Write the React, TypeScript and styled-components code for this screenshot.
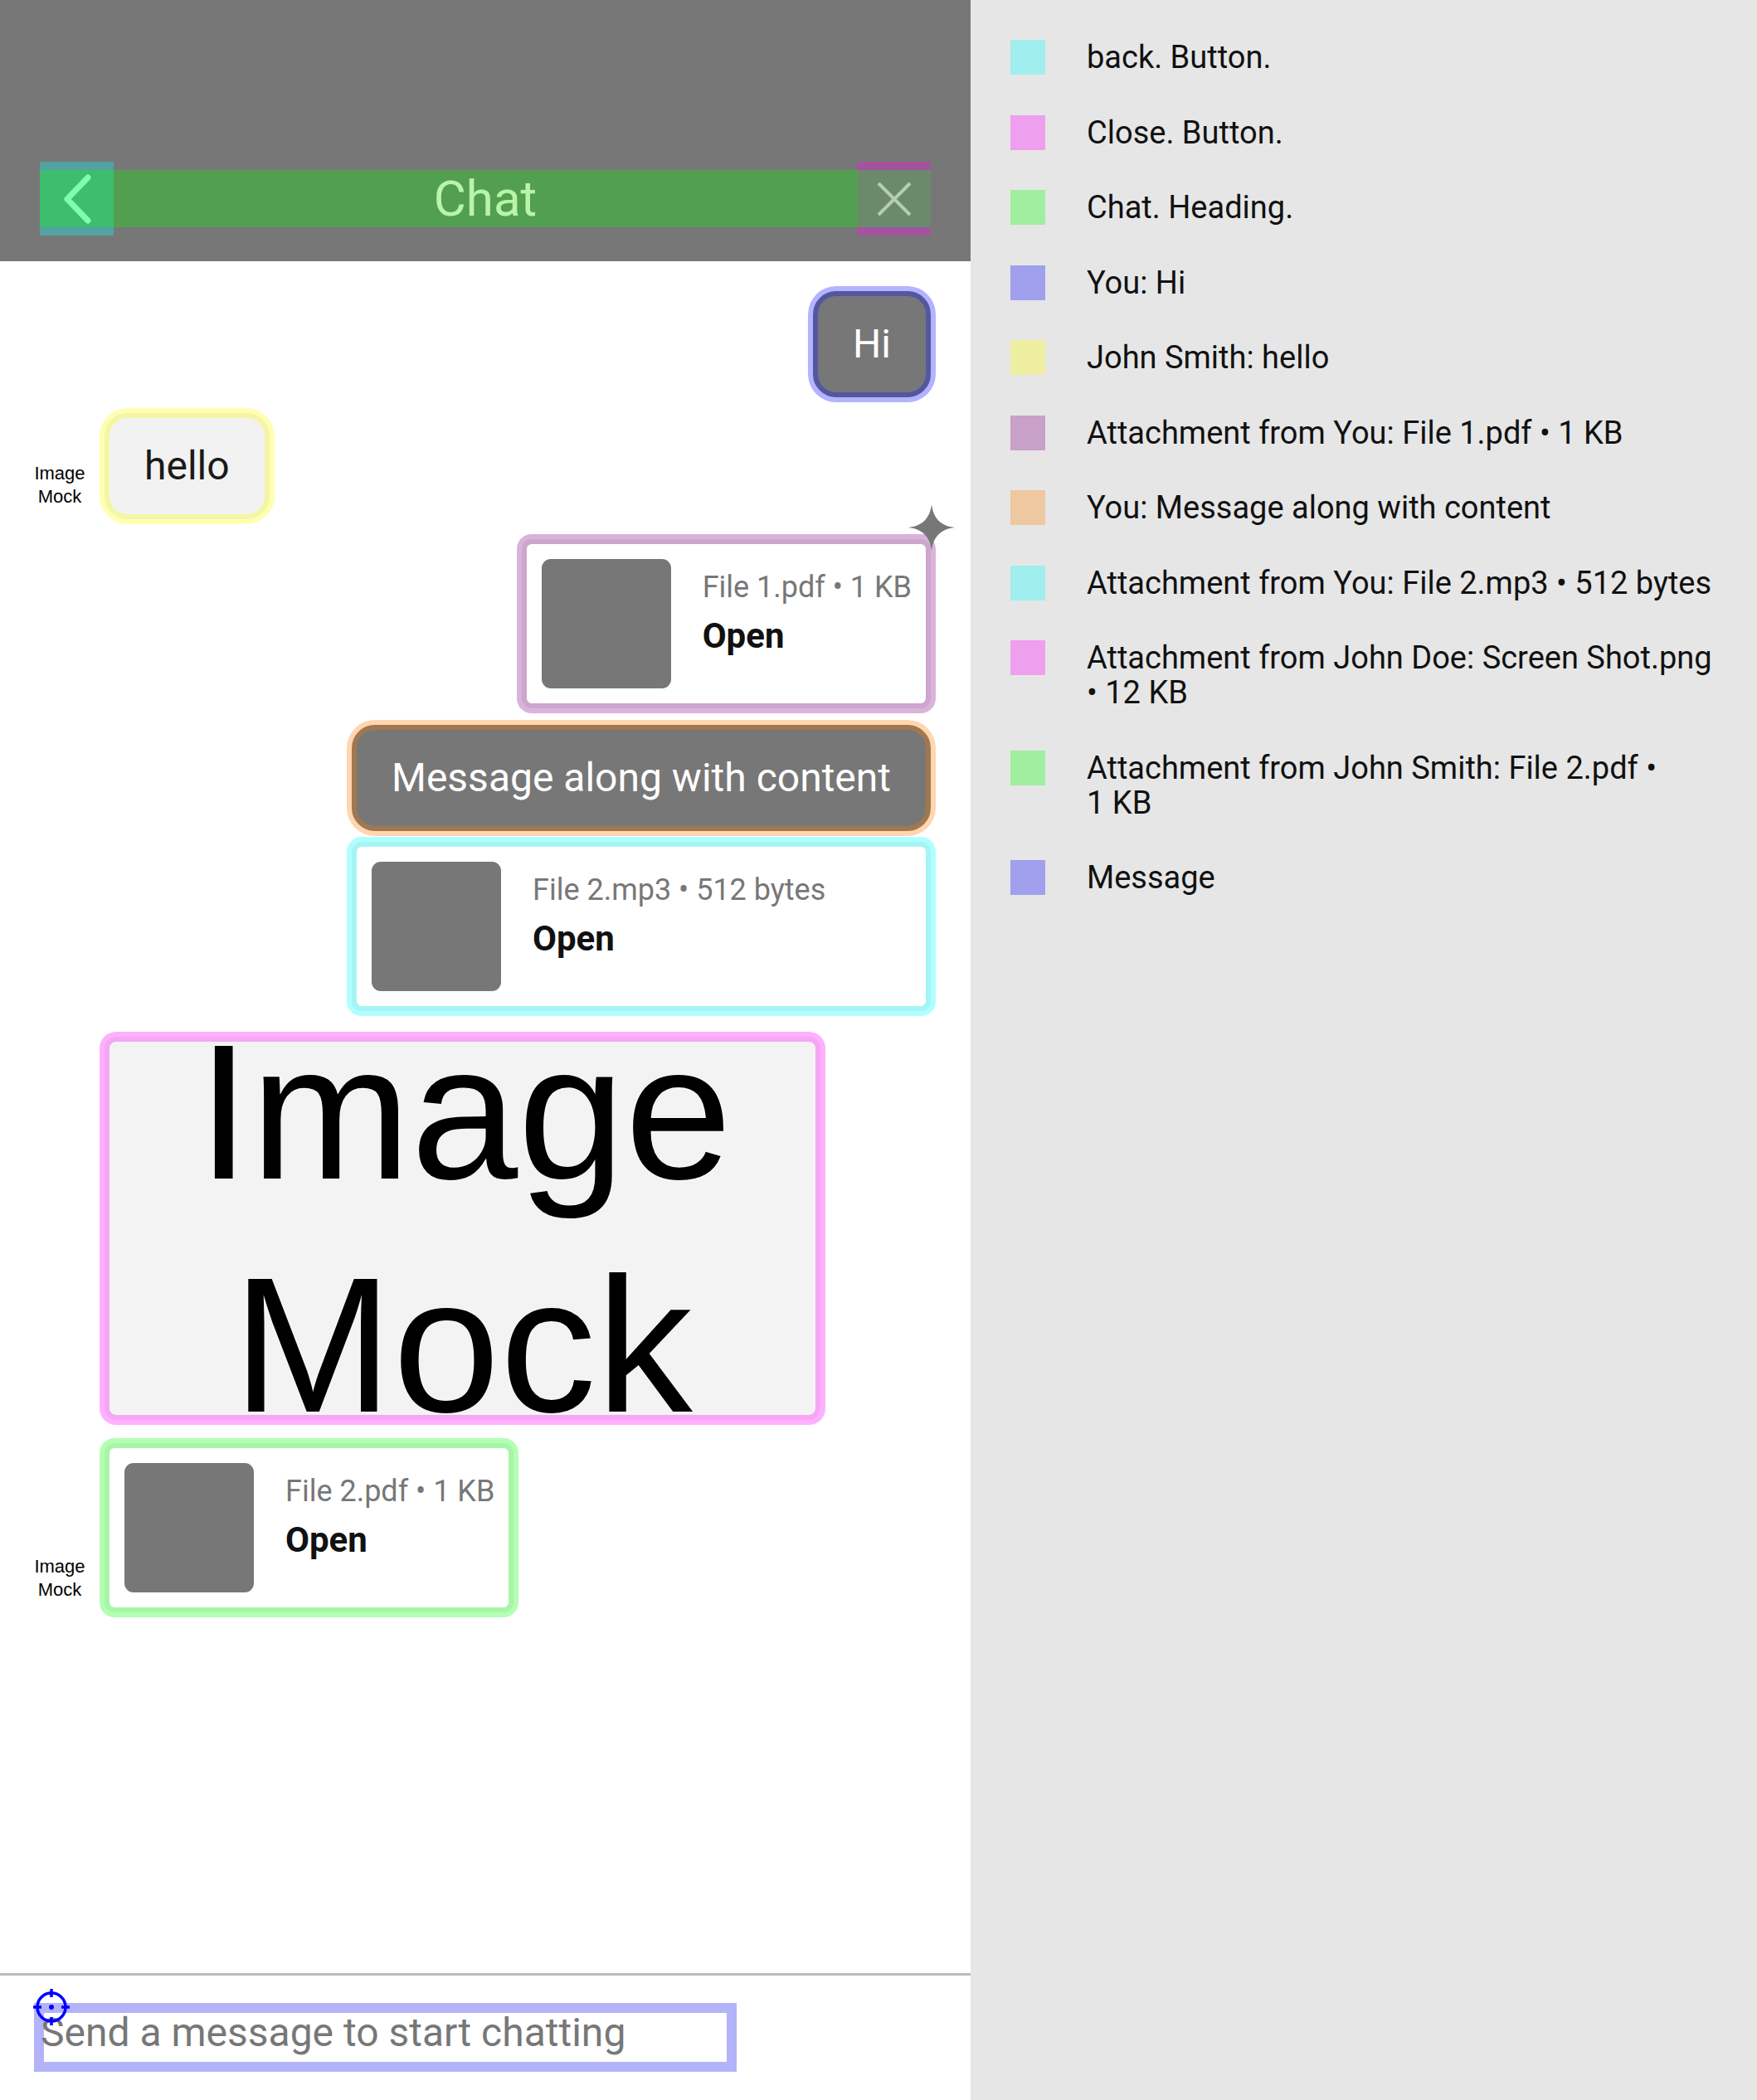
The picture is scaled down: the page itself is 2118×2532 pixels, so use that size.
import React from "react";
import styled, { createGlobalStyle } from "styled-components";

const GlobalStyle = createGlobalStyle`
  html, body {
    margin: 0;
    padding: 0;
    background: #ffffff;
  }
  body {
    font-family: Roboto, "Noto Sans", "Liberation Sans", sans-serif;
  }
  * {
    box-sizing: border-box;
  }
`;

type Tone = { glow: string; ring: string };

const TONES: Record<string, Tone> = {
  lavender: { glow: "#b3b3ff", ring: "#5656a0" },
  yellow: { glow: "#ffffb3", ring: "#f5f5a8" },
  purple: { glow: "#d9b3d9", ring: "#cda5cd" },
  peach: { glow: "#ffd6b0", ring: "#a07850" },
  cyan: { glow: "#b0ffff", ring: "#a6f5f5" },
  pink: { glow: "#ffb0ff", ring: "#f5a6f5" },
  green: { glow: "#b3ffb3", ring: "#a8f5a8" },
};

const LEGEND = [
  { color: "#a0eeee", label: "back. Button." },
  { color: "#eea0ee", label: "Close. Button." },
  { color: "#a0eea0", label: "Chat. Heading." },
  { color: "#a0a0ee", label: "You: Hi" },
  { color: "#eeeea0", label: "John Smith: hello" },
  { color: "#c8a0c8", label: "Attachment from You: File 1.pdf • 1\u00a0KB" },
  { color: "#eec8a0", label: "You: Message along with content" },
  { color: "#a0eeee", label: "Attachment from You: File 2.mp3 • 512\u00a0bytes" },
  { color: "#eea0ee", label: "Attachment from John Doe: Screen Shot.png • 12\u00a0KB" },
  { color: "#a0eea0", label: "Attachment from John Smith: File 2.pdf • 1\u00a0KB" },
  { color: "#a0a0ee", label: "Message" },
];

function FileCard({ tone, name }: { tone: Tone; name: string }) {
  return (
    <Card $tone={tone}>
      <Thumb />
      <FileText>
        <FileName>{name}</FileName>
        <OpenLabel>Open</OpenLabel>
      </FileText>
    </Card>
  );
}

export default function App() {
  return (
    <>
      <GlobalStyle />
      <Page>
        <ChatPane>
          <Header>
            <HeaderRow>
              <HeaderButton $edge="#52a3a1" $mid="#3dbd6d" aria-label="back">
                <svg width="36" height="62" viewBox="0 0 36 62">
                  <polyline
                    points="31,5 6,31 31,57"
                    fill="none"
                    stroke="#80fcb0"
                    strokeWidth="7"
                    strokeLinecap="round"
                    strokeLinejoin="round"
                  />
                </svg>
              </HeaderButton>
              <Title>Chat</Title>
              <HeaderButton $edge="#a2549f" $mid="#6b8a6c" aria-label="close">
                <svg width="42" height="42" viewBox="0 0 42 42">
                  <path d="M2 2 L40 40 M40 2 L2 40" stroke="#b6cdb6" strokeWidth="4" />
                </svg>
              </HeaderButton>
            </HeaderRow>
          </Header>

          <MessageList>
            <Row $end $mt={0}>
              <Bubble $mine $tone={TONES.lavender}>Hi</Bubble>
            </Row>

            <Row $mt={19}>
              <Avatar>Image Mock</Avatar>
              <Bubble $tone={TONES.yellow}>hello</Bubble>
            </Row>

            <Row $end $mt={24}>
              <Anchor>
                <FileCard tone={TONES.purple} name="File 1.pdf • 1 KB" />
                <Sparkle width="56" height="56" viewBox="0 0 56 56">
                  <path
                    d="M28 0 C30 17 39 26 56 28 C39 30 30 39 28 56 C26 39 17 30 0 28 C17 26 26 17 28 0 Z"
                    fill="#777777"
                  />
                </Sparkle>
              </Anchor>
            </Row>

            <Row $end $mt={20}>
              <Stack>
                <Bubble $mine $tone={TONES.peach}>Message along with content</Bubble>
                <FileCard tone={TONES.cyan} name="File 2.mp3 • 512 bytes" />
              </Stack>
            </Row>

            <Row $mt={31}>
              <AvatarSpace />
              <ImageBubble $tone={TONES.pink}>
                <ImageAlt>Image Mock</ImageAlt>
              </ImageBubble>
            </Row>

            <Row $mt={28}>
              <Avatar>Image Mock</Avatar>
              <FileCard tone={TONES.green} name="File 2.pdf • 1 KB" />
            </Row>
          </MessageList>

          <Footer>
            <InputArea>
              <InputFrame />
              <MessageInput placeholder="Send a message to start chatting" />
              <Crosshair width="48" height="48" viewBox="0 0 48 48">
                <g stroke="#0000ff" strokeWidth="3.5" fill="none">
                  <circle cx="24" cy="24" r="17" />
                  <path d="M24 2 V12 M24 36 V46 M2 24 H12 M36 24 H46" />
                </g>
                <circle cx="24" cy="24" r="3" fill="#0000ff" />
              </Crosshair>
            </InputArea>
          </Footer>
        </ChatPane>

        <LegendPane>
          {LEGEND.map((item, i) => (
            <LegendItem key={i}>
              <Swatch $color={item.color} />
              <LegendText>{item.label}</LegendText>
            </LegendItem>
          ))}
        </LegendPane>
      </Page>
    </>
  );
}

// --- Styled Components ---

const Page = styled.div`
  display: flex;
  width: 2118px;
  height: 2532px;
  overflow: hidden;
`;

const ChatPane = styled.div`
  width: 1170px;
  flex-shrink: 0;
  display: flex;
  flex-direction: column;
  background: #ffffff;
`;

const Header = styled.header`
  height: 315px;
  flex-shrink: 0;
  background: #777777;
  display: flex;
  align-items: flex-end;
  padding: 0 48px 31px;
`;

const HeaderRow = styled.div`
  display: flex;
  align-items: center;
  width: 100%;
`;

const HeaderButton = styled.div<{ $edge: string; $mid: string }>`
  width: 89px;
  height: 89px;
  flex-shrink: 0;
  display: flex;
  align-items: center;
  justify-content: center;
  background: linear-gradient(
    to bottom,
    ${({ $edge }) => $edge} 0 10px,
    ${({ $mid }) => $mid} 10px 79px,
    ${({ $edge }) => $edge} 79px
  );
`;

const Title = styled.h1`
  flex: 1;
  margin: 0;
  height: 69px;
  background: #539f51;
  color: #b8f5a8;
  font-size: 60px;
  font-weight: 400;
  line-height: 69px;
  text-align: center;
`;

const MessageList = styled.div`
  flex: 1;
  display: flex;
  flex-direction: column;
  padding: 36px 48px 0 40px;
`;

const Row = styled.div<{ $end?: boolean; $mt: number }>`
  display: flex;
  justify-content: ${({ $end }) => ($end ? "flex-end" : "flex-start")};
  margin-top: ${({ $mt }) => $mt}px;
`;

const Avatar = styled.div`
  width: 64px;
  margin-right: 22px;
  margin-bottom: 14px;
  align-self: flex-end;
  flex-shrink: 0;
  font-family: "Liberation Sans", Arial, sans-serif;
  font-size: 22px;
  line-height: 27.5px;
  color: #000000;
  text-align: center;
`;

const AvatarSpace = styled.div`
  width: 64px;
  margin-right: 22px;
  flex-shrink: 0;
`;

const Bubble = styled.div<{ $mine?: boolean; $tone: Tone }>`
  padding: 30px 42px;
  border: 6px solid ${({ $tone }) => $tone.ring};
  border-radius: 28px;
  box-shadow: 0 0 0 6px ${({ $tone }) => $tone.glow};
  background: ${({ $mine }) => ($mine ? "#777777" : "#f2f2f2")};
  color: ${({ $mine }) => ($mine ? "#ffffff" : "#1a1a1a")};
  font-size: 48px;
  line-height: 56px;
  white-space: nowrap;
`;

const Stack = styled.div`
  display: flex;
  flex-direction: column;
  align-items: stretch;
  gap: 13px;
`;

const Anchor = styled.div`
  position: relative;
`;

const Sparkle = styled.svg`
  position: absolute;
  top: -42px;
  right: -29px;
`;

const Card = styled.div<{ $tone: Tone }>`
  display: flex;
  align-items: flex-start;
  gap: 38px;
  padding: 18px 17px 18px 18px;
  background: #ffffff;
  border: 6px solid ${({ $tone }) => $tone.ring};
  border-radius: 12px;
  box-shadow: 0 0 0 6px ${({ $tone }) => $tone.glow};
`;

const Thumb = styled.div`
  width: 156px;
  height: 156px;
  flex-shrink: 0;
  border-radius: 11px;
  background: #777777;
`;

const FileText = styled.div`
  display: flex;
  flex-direction: column;
  gap: 13px;
  padding-top: 13px;
`;

const FileName = styled.div`
  font-size: 36px;
  color: #777777;
  white-space: nowrap;
`;

const OpenLabel = styled.div`
  font-size: 42px;
  font-weight: 700;
  color: #111111;
`;

const ImageBubble = styled.div<{ $tone: Tone }>`
  width: 863px;
  height: 462px;
  display: flex;
  align-items: center;
  justify-content: center;
  background: #f3f3f3;
  border: 6px solid ${({ $tone }) => $tone.ring};
  border-radius: 14px;
  box-shadow: 0 0 0 6px ${({ $tone }) => $tone.glow};
`;

const ImageAlt = styled.div`
  font-family: "Liberation Sans", Arial, sans-serif;
  font-size: 232px;
  line-height: 281px;
  color: #000000;
  text-align: center;
  width: 640px;
  text-shadow: 0 0 2px #ffffff, 0 0 2px #ffffff;
`;

const Footer = styled.footer`
  height: 153px;
  flex-shrink: 0;
  border-top: 3px solid #bcbcbc;
  padding: 38px 0 0 49px;
`;

const InputArea = styled.div`
  position: relative;
  width: 826px;
  height: 60px;
`;

const InputFrame = styled.div`
  position: absolute;
  left: -8px;
  top: -5px;
  width: 847px;
  height: 83px;
  border: 12px solid #b3b3fa;
  pointer-events: none;
`;

const MessageInput = styled.input`
  position: relative;
  width: 100%;
  height: 60px;
  padding: 0;
  border: none;
  outline: none;
  background: transparent;
  font-family: Roboto, "Noto Sans", sans-serif;
  font-size: 48px;
  color: #333333;

  &::placeholder {
    color: #777777;
  }
`;

const Crosshair = styled.svg`
  position: absolute;
  left: -11px;
  top: -24px;
`;

const LegendPane = styled.aside`
  flex: 1;
  background: #e6e6e6;
  display: flex;
  flex-direction: column;
  gap: 48.5px;
  padding: 48px 46px 0 48px;
`;

const LegendItem = styled.div`
  display: flex;
  align-items: flex-start;
  gap: 50px;
`;

const Swatch = styled.div<{ $color: string }>`
  width: 42px;
  height: 42px;
  flex-shrink: 0;
  background: ${({ $color }) => $color};
`;

const LegendText = styled.div`
  font-size: 38px;
  line-height: 42px;
  color: #111111;
`;
